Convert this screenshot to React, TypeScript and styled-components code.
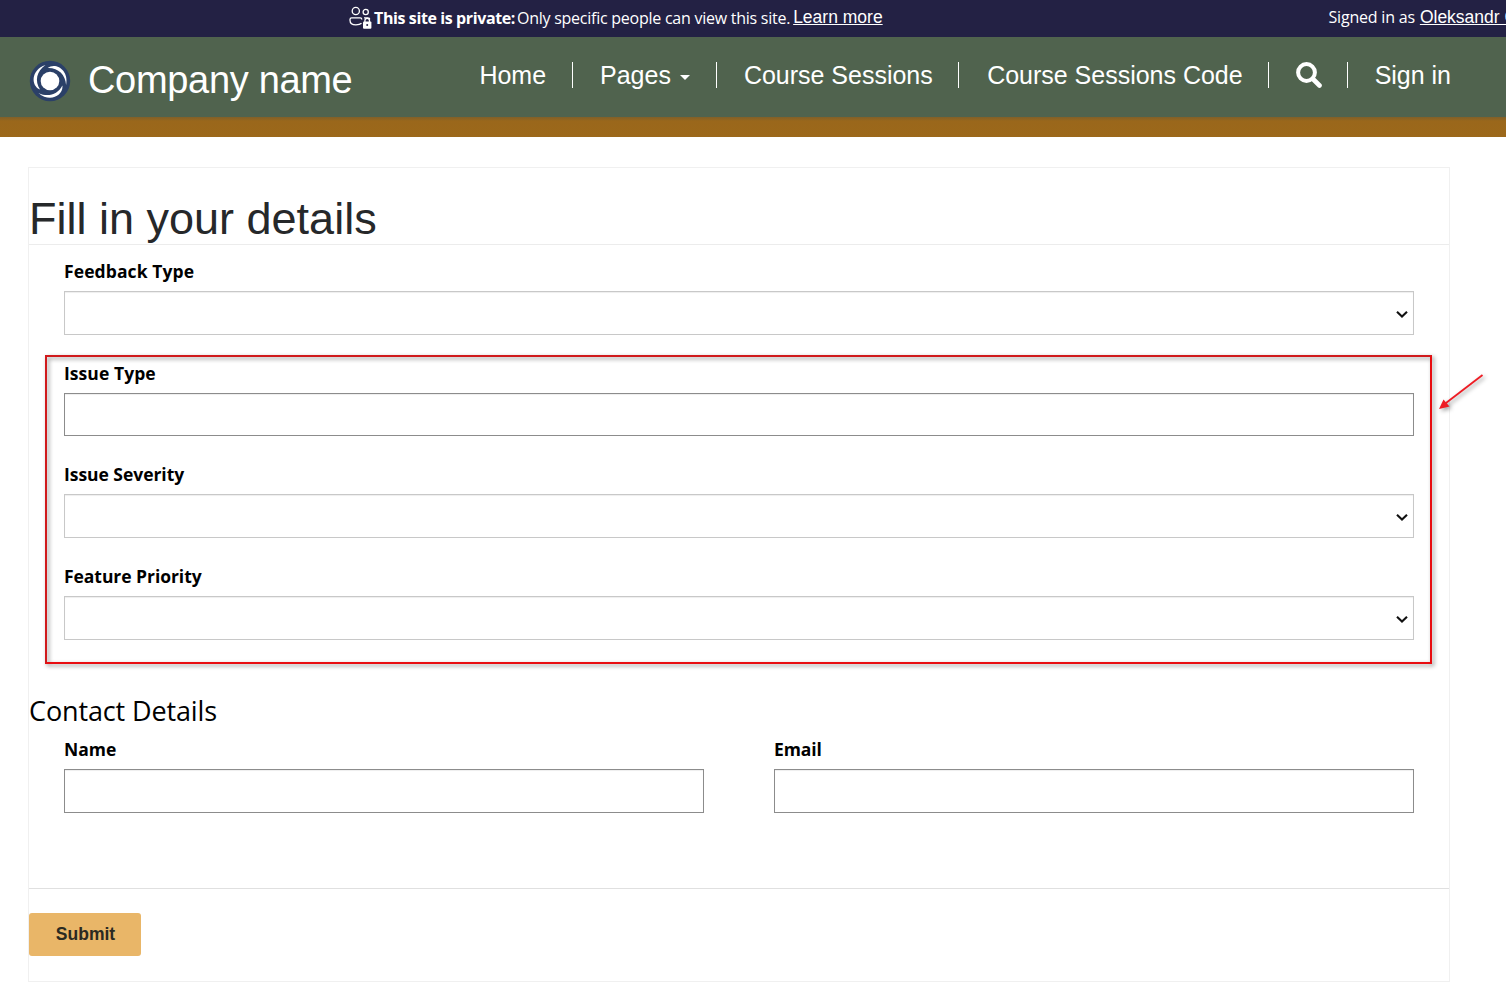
import React from 'react';
import styled, { createGlobalStyle } from 'styled-components';

const GlobalStyle = createGlobalStyle`
  *, *::before, *::after { box-sizing: border-box; }
  html, body { margin: 0; padding: 0; overflow: hidden; background: #fff; }
  body { width: 1506px; height: 991px; font-family: 'Open Sans', 'Noto Sans', sans-serif; color: #000; }
`;

const arial = `'Liberation Sans', Arial, sans-serif`;

const Banner = styled.div`
  display: flex;
  justify-content: space-between;
  height: 37px;
  padding-left: 349px;
  background: #232144;
  color: #fff;
  font-size: 16px;
  line-height: 37px;
  white-space: nowrap;
  overflow: hidden;
`;
const BannerMessage = styled.div`
  display: flex;
`;
const BannerIcon = styled.svg`
  width: 23px;
  height: 24px;
  margin: 6px 2px 0 0;
`;
const BannerText = styled.span<{ $bold?: boolean; $spacing: string; $gap: number }>`
  font-weight: ${(p) => (p.$bold ? 700 : 400)};
  letter-spacing: ${(p) => p.$spacing};
  margin-right: ${(p) => p.$gap}px;
`;
const BannerLink = styled.a`
  font: 17.5px/34px ${arial};
  text-decoration: underline;
  text-decoration-thickness: 1px;
  text-underline-offset: 1px;
  color: #fff;
`;
const Account = styled.div`
  width: 177.5px;
  flex: none;
  line-height: 35px;
`;

const Header = styled.header`
  display: flex;
  justify-content: space-between;
  height: 80px;
  padding: 0 55px 0 29px;
  background: #50634e;
  color: #fff;
  font-family: ${arial};
`;
const Brand = styled.div`
  display: flex;
  align-items: center;
  gap: 17px;
  height: 86px;
  font-size: 38px;
  letter-spacing: -0.32px;
  white-space: nowrap;
`;
const Logo = styled.svg`
  width: 42px;
  height: 42px;
  margin-top: 2px;
`;
const Nav = styled.nav`
  display: flex;
  height: 26px;
  margin-top: 25px;
`;
const NavItem = styled.a<{ $trim?: number; $shift?: number }>`
  display: flex;
  align-items: center;
  padding: 0 ${(p) => 26 - (p.$trim ?? 0)}px 0 ${(p) => 27 + (p.$shift ?? 0)}px;
  border-left: 1px solid #fff;
  font-size: 25px;
  line-height: 26px;
  letter-spacing: -0.01px;
  white-space: nowrap;
  &:first-child { border-left: 0; }
  &:last-child { padding-right: 0; }
`;
const Caret = styled.span`
  margin: 4px 0 0 9px;
  border: 5px solid transparent;
  border-top-color: #fff;
  border-bottom: 0;
`;
const SearchIcon = styled.svg`
  width: 26px;
  height: 26px;
  margin-bottom: 1px;
`;
const Accent = styled.div`
  height: 20px;
  background: linear-gradient(#80602a 0, #9a671b 4px, #9c681a 100%);
`;

const Panel = styled.main`
  position: relative;
  width: 1422px;
  height: 815px;
  margin: 30px 0 0 28px;
  border: 1px solid #f0f0f0;
`;
const Title = styled.h1`
  height: 77px;
  margin: 0;
  padding-top: 25px;
  border-bottom: 1px solid #ececec;
  font: 45px/52px ${arial};
  color: #26282a;
`;
const Fields = styled.div<{ $height: number }>`
  display: flex;
  gap: 70px;
  height: ${(p) => p.$height}px;
  padding: 0 35px;
`;
const Field = styled.label`
  flex: 1;
  display: block;
`;
const FieldLabel = styled.span<{ $spacing?: number }>`
  display: block;
  height: 46px;
  padding-top: 14px;
  font-size: 17.5px;
  font-weight: 700;
  line-height: 24px;
  letter-spacing: ${(p) => p.$spacing ?? 0.06}px;
`;
const Control = styled.span<{ $select?: boolean; $height?: number }>`
  display: flex;
  align-items: center;
  justify-content: flex-end;
  height: ${(p) => p.$height ?? 44}px;
  padding: 2px 5px 0 0;
  border: 1px solid ${(p) => (p.$select ? '#c8c8c8' : '#8c8c8c')};
  box-shadow: inset 0 1px 1px rgba(0, 0, 0, 0.07);
`;
const Chevron = () => (
  <svg width="13" height="9" viewBox="0 0 13 9" fill="none" stroke="#111" strokeWidth="2.1">
    <path d="M2 1.7 7 6.5 12 1.7" />
  </svg>
);
const SectionTitle = styled.h2`
  height: 38px;
  margin: 33px 0 0;
  padding-top: 8px;
  font-size: 27px;
  font-weight: 400;
  line-height: 36px;
  letter-spacing: -0.13px;
`;
const Actions = styled.div`
  border-top: 1px solid #e0e0e0;
  padding-top: 24px;
`;
const Submit = styled.button`
  display: block;
  width: 112px;
  height: 43px;
  padding: 0;
  border: 0;
  border-radius: 3px;
  background: #e9b668;
  color: #2b2a22;
  font: bold 17.5px ${arial};
  text-indent: 1px;
`;
const Highlight = styled.div`
  position: absolute;
  left: 16px;
  top: 187px;
  width: 1387px;
  height: 309px;
  border: 2px solid;
  border-color: #d01a1c #e80c10 #e80c10 #d01a1c;
  filter: drop-shadow(2px 2px 2px rgba(0, 0, 0, 0.45));
`;
const Arrow = styled.svg`
  position: absolute;
  left: 1400px;
  top: 197px;
  width: 64px;
  height: 56px;
  filter: drop-shadow(2px 2px 2px rgba(0, 0, 0, 0.4));
`;

const BLADE = 'M11 29.5C2 26 1.5 10 16.5 5 7.5 11 5.5 21 11 29.5Z';

export default function App() {
  return (
    <>
      <GlobalStyle />
      <Banner>
        <BannerMessage>
          <BannerIcon viewBox="0 0 23 24" fill="none" stroke="#fff" strokeWidth="1.3">
            <circle cx="6.8" cy="5" r="3.6" />
            <circle cx="16.7" cy="6" r="2.6" />
            <path d="M12.5 17.2c-1 1-3.2 1.6-5.6 1.6C3.3 18.8 1 17 1 14.2V13.4c0-.9.7-1.6 1.6-1.6h8.6c.9 0 1.6.7 1.6 1.6M15 11.8h3.8c1.2 0 2 .6 2 1.4" />
            <path d="M15.900 16v-1.300a2.300 2.300 0 0 1 4.600 0V16" />
            <rect x="14" y="15.5" width="8.4" height="7.2" rx="1" fill="#fff" stroke="none" />
            <circle cx="18.2" cy="19" r="1" fill="#232144" stroke="none" />
          </BannerIcon>
          <BannerText $bold $spacing="-0.39px" $gap={2}>This site is private:</BannerText>
          <BannerText $spacing="-0.25px" $gap={3}>Only specific people can view this site.</BannerText>
          <BannerLink>Learn more</BannerLink>
        </BannerMessage>
        <Account>
          <BannerText $spacing="-0.2px" $gap={5}>Signed in as</BannerText>
          <BannerLink>Oleksandr G</BannerLink>
        </Account>
      </Banner>
      <Header>
        <Brand>
          <Logo viewBox="0 0 42 42">
            <circle cx="21" cy="21" r="20.2" fill="#2b4068" />
            <circle cx="21" cy="21" r="9.3" fill="#fff" />
            <g fill="#fff">
              <path d={BLADE} />
              <path d={BLADE} transform="rotate(120 21 21)" />
              <path d={BLADE} transform="rotate(240 21 21)" />
            </g>
          </Logo>
          Company name
        </Brand>
        <Nav>
          <NavItem>Home</NavItem>
          <NavItem>Pages<Caret /></NavItem>
          <NavItem $trim={0.6}>Course Sessions</NavItem>
          <NavItem $trim={1} $shift={1}>Course Sessions Code</NavItem>
          <NavItem $trim={1}>
            <SearchIcon viewBox="0 0 26 26" fill="none" stroke="#fff">
              <circle cx="10.5" cy="10.5" r="8.4" strokeWidth="4" />
              <path d="m17 17 6.5 6.5" strokeWidth="4.6" strokeLinecap="round" />
            </SearchIcon>
          </NavItem>
          <NavItem>Sign in</NavItem>
        </Nav>
      </Header>
      <Accent />
      <Panel>
        <Title>Fill in your details</Title>
        <Fields $height={102}>
          <Field><FieldLabel $spacing={0.1}>Feedback Type</FieldLabel><Control $select><Chevron /></Control></Field>
        </Fields>
        <Fields $height={101}>
          <Field><FieldLabel>Issue Type</FieldLabel><Control $height={43} /></Field>
        </Fields>
        <Fields $height={102}>
          <Field><FieldLabel $spacing={-0.04}>Issue Severity</FieldLabel><Control $select><Chevron /></Control></Field>
        </Fields>
        <Fields $height={102}>
          <Field><FieldLabel $spacing={-0.05}>Feature Priority</FieldLabel><Control $select><Chevron /></Control></Field>
        </Fields>
        <SectionTitle>Contact Details</SectionTitle>
        <Fields $height={165}>
          <Field><FieldLabel $spacing={0}>Name</FieldLabel><Control /></Field>
          <Field><FieldLabel $spacing={-0.1}>Email</FieldLabel><Control /></Field>
        </Fields>
        <Actions><Submit>Submit</Submit></Actions>
        <Highlight />
        <Arrow viewBox="0 0 64 56" fill="none">
          <path d="M53.5 10 15 39.5" stroke="#ee1c24" strokeWidth="1.8" />
          <path d="M10 44 14.5 34.5 20.5 41.5Z" fill="#ee1c24" />
        </Arrow>
      </Panel>
    </>
  );
}
